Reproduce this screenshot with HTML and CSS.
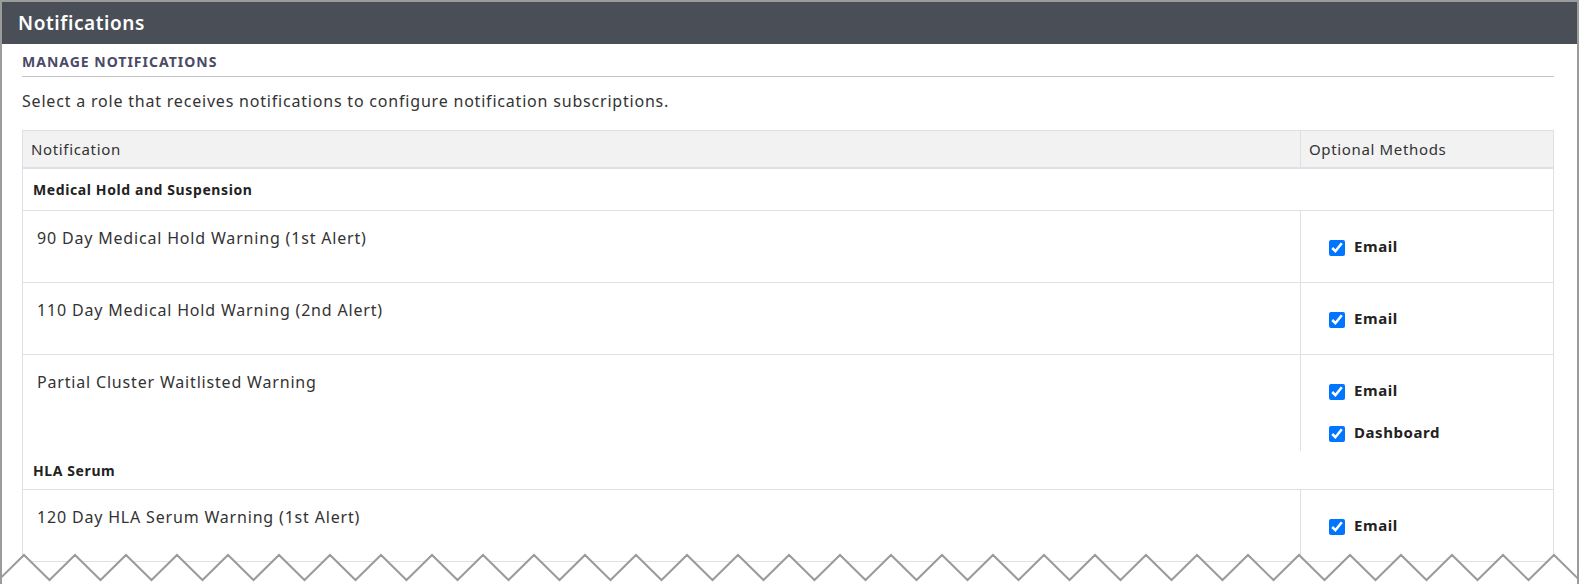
FILE: index.html
```html
<!DOCTYPE html>
<html lang="en">
<head>
<meta charset="utf-8">
<title>Notifications</title>
<link rel="stylesheet" href="styles.css">
</head>
<body>
<div class="frame">
  <div class="panel-header">Notifications</div>
  <div class="panel-body">
    <div class="section-title">MANAGE NOTIFICATIONS</div>
    <p class="description">Select a role that receives notifications to configure notification subscriptions.</p>
    <div class="grid-table">
      <div class="thead">
        <div class="th th-name">Notification</div>
        <div class="th th-methods">Optional Methods</div>
      </div>
      <div class="group-row group-first">Medical Hold and Suspension</div>
      <div class="row">
        <div class="cell-name">90 Day Medical Hold Warning (1st Alert)</div>
        <div class="cell-methods">
          <label class="method"><input type="checkbox" checked><span>Email</span></label>
        </div>
      </div>
      <div class="row">
        <div class="cell-name">110 Day Medical Hold Warning (2nd Alert)</div>
        <div class="cell-methods">
          <label class="method"><input type="checkbox" checked><span>Email</span></label>
        </div>
      </div>
      <div class="row row-open">
        <div class="cell-name">Partial Cluster Waitlisted Warning</div>
        <div class="cell-methods">
          <label class="method"><input type="checkbox" checked><span>Email</span></label>
          <label class="method"><input type="checkbox" checked><span>Dashboard</span></label>
        </div>
      </div>
      <div class="group-row group-second">HLA Serum</div>
      <div class="row">
        <div class="cell-name">120 Day HLA Serum Warning (1st Alert)</div>
        <div class="cell-methods">
          <label class="method"><input type="checkbox" checked><span>Email</span></label>
        </div>
      </div>
    </div>
  </div>
  <svg class="torn-edge" width="1579" height="32" viewBox="0 0 1579 32" aria-hidden="true">
    <path class="torn-fill" d="M-1.5 28l25.5-25 25.5 25l25.5-25 25.5 25l25.5-25 25.5 25l25.5-25 25.5 25l25.5-25 25.5 25l25.5-25 25.5 25l25.5-25 25.5 25l25.5-25 25.5 25l25.5-25 25.5 25l25.5-25 25.5 25l25.5-25 25.5 25l25.5-25 25.5 25l25.5-25 25.5 25l25.5-25 25.5 25l25.5-25 25.5 25l25.5-25 25.5 25l25.5-25 25.5 25l25.5-25 25.5 25l25.5-25 25.5 25l25.5-25 25.5 25l25.5-25 25.5 25l25.5-25 25.5 25l25.5-25 25.5 25l25.5-25 25.5 25l25.5-25 25.5 25l25.5-25 25.5 25l25.5-25 25.5 25l25.5-25 25.5 25l25.5-25 25.5 25l25.5-25 25.5 25l25.5-25 25.5 25L1582 34L-3 34Z"/>
    <path class="torn-line" d="M-1.5 28l25.5-25 25.5 25l25.5-25 25.5 25l25.5-25 25.5 25l25.5-25 25.5 25l25.5-25 25.5 25l25.5-25 25.5 25l25.5-25 25.5 25l25.5-25 25.5 25l25.5-25 25.5 25l25.5-25 25.5 25l25.5-25 25.5 25l25.5-25 25.5 25l25.5-25 25.5 25l25.5-25 25.5 25l25.5-25 25.5 25l25.5-25 25.5 25l25.5-25 25.5 25l25.5-25 25.5 25l25.5-25 25.5 25l25.5-25 25.5 25l25.5-25 25.5 25l25.5-25 25.5 25l25.5-25 25.5 25l25.5-25 25.5 25l25.5-25 25.5 25l25.5-25 25.5 25l25.5-25 25.5 25l25.5-25 25.5 25l25.5-25 25.5 25l25.5-25 25.5 25l25.5-25 25.5 25"/>
  </svg>
</div>
</body>
</html>
```

FILE: styles.css
```css
html, body {
  margin: 0;
  padding: 0;
  background: #ffffff;
  overflow: hidden;
}

body {
  font-family: "Noto Sans", "Open Sans", sans-serif;
  color: #333333;
}

.frame {
  position: relative;
  box-sizing: border-box;
  width: 1579px;
  height: 584px;
  border: 2px solid #9b9b9b;
  border-bottom: none;
  overflow: hidden;
  background: #ffffff;
}

.panel-header {
  height: 42px;
  line-height: 42px;
  padding-left: 16px;
  background: #4a4f57;
  color: #ffffff;
  font-size: 19px;
  font-weight: 600;
  letter-spacing: 0.6px;
}

.panel-body {
  padding: 0 23px 0 20px;
}

.section-title {
  padding-top: 8px;
  padding-bottom: 4px;
  line-height: 20px;
  font-size: 14px;
  font-weight: 700;
  letter-spacing: 1px;
  color: #4a4a66;
  border-bottom: 1px solid #c4c4c8;
}

.description {
  margin: 13px 0 0 0;
  font-size: 16px;
  line-height: 22px;
  letter-spacing: 0.8px;
  color: #333333;
}

.grid-table {
  margin-top: 18px;
  border: 1px solid #dde0e4;
  border-bottom: none;
}

.thead {
  display: flex;
  height: 36px;
  background: #f2f2f2;
  border-bottom: 2px solid #dde0e4;
}

.th {
  display: flex;
  align-items: center;
  padding-left: 8px;
  font-size: 15px;
  letter-spacing: 0.65px;
  color: #333333;
}

.th-name {
  flex: 1;
}

.th-methods {
  width: 244px;
  border-left: 1px solid #dde0e4;
}

.group-row {
  display: flex;
  align-items: center;
  padding-left: 10px;
  font-size: 14px;
  font-weight: 700;
  letter-spacing: 0.6px;
  color: #222222;
  border-bottom: 1px solid #dde0e4;
}

.group-first {
  height: 41px;
}

.group-second {
  height: 38px;
}

.row {
  display: flex;
  min-height: 71px;
  border-bottom: 1px solid #dde0e4;
}

.row-open {
  border-bottom: none;
}

.cell-name {
  flex: 1;
  padding: 15px 0 0 14px;
  font-size: 16px;
  line-height: 24px;
  letter-spacing: 0.82px;
  color: #333333;
}

.cell-methods {
  box-sizing: border-box;
  width: 253px;
  border-left: 1px solid #dde0e4;
  padding: 28px 0 9px 28px;
  display: flex;
  flex-direction: column;
  gap: 25px;
}

.method {
  display: flex;
  align-items: center;
  gap: 9px;
  height: 17px;
  font-size: 15px;
  font-weight: 700;
  letter-spacing: 0.55px;
  color: #222222;
}

.method input {
  width: 16px;
  height: 16px;
  margin: 0;
}

.method span {
  position: relative;
  top: -2px;
}

.torn-edge {
  position: absolute;
  left: -2px;
  bottom: 0;
  display: block;
}

.torn-fill {
  fill: #ffffff;
}

.torn-line {
  fill: none;
  stroke: #9b9b9b;
  stroke-width: 2;
}
```
